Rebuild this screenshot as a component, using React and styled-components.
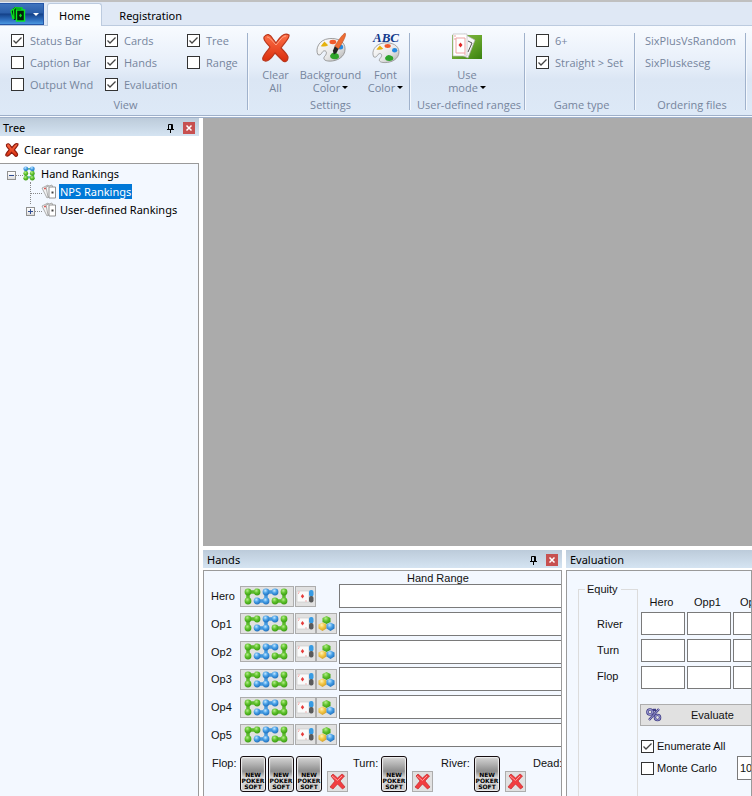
import React from "react";
import styled, { createGlobalStyle, css } from "styled-components";

const UI = '"Open Sans", "Noto Sans", sans-serif';
const UI_DARK = '"Noto Sans", "Open Sans", sans-serif';
const DIALOG = '"Liberation Sans", Arial, sans-serif';

const GlobalStyle = createGlobalStyle`
  *, *::before, *::after { box-sizing: border-box; }
  html, body, #root { height: 100%; margin: 0; }
  body { overflow: hidden; background: #fff; color: #000; font: 12px/18px ${UI}; }
  button, input { font: inherit; color: inherit; margin: 0; border-radius: 0; }
  svg { display: block; flex: none; overflow: visible; }
`;

const Window = styled.div`
  display: flex;
  flex-direction: column;
  height: 100%;
  overflow: hidden;
`;

/* ---------- Ribbon ---------- */

const TabBar = styled.nav`
  display: flex;
  flex: none;
  height: 26px;
  padding-top: 1px;
  border-top: 2px solid #c0c0c0;
  border-bottom: 1px solid #bccbdf;
  background: #dfe8f5;
`;

const AppButton = styled.button`
  display: flex;
  align-items: center;
  justify-content: center;
  gap: 5px;
  width: 44px;
  height: 22px;
  margin-right: 3px;
  padding: 0 2px 0 8px;
  border: 1px solid #2556a8;
  border-left: 0;
  background: linear-gradient(#3f74bd, #2a5da8 45%, #134088 50%, #2f70c0 80%, #4b98e0);
`;

const Tab = styled.button`
  height: 23px;
  padding: 0 11px;
  border: 1px solid transparent;
  border-bottom: 0;
  background: transparent;
  font: 11px/21px ${UI_DARK};
  margin-right: 5px;
  ${(p) =>
    p.$active &&
    css`
      border-color: #bccbdf;
      border-radius: 3px 3px 0 0;
      background: #f9fcff;
    `}
`;

const Ribbon = styled.div`
  display: flex;
  flex: none;
  height: 92px;
  padding-top: 7px;
  background: linear-gradient(#f8fbff, #e6eef9 45%, #dbe6f4 60%, #dde9f7);
  border-bottom: 3px double #9eb0ca;
  color: #76859d;
  font-size: 11px;
  line-height: 13px;
`;

const Group = styled.section`
  display: flex;
  flex-direction: column;
  flex: none;
  width: ${(p) => p.$width}px;
  height: 77px;
  border-right: 1px solid #a0b2cc;
  box-shadow: 1px 0 #f4f8fd;
`;

const GroupBody = styled.div`
  display: flex;
  flex: 1;
  min-height: 0;
  padding-left: ${(p) => p.$indent || 0}px;
  justify-content: ${(p) => (p.$center ? "center" : "flex-start")};
`;

const GroupTitle = styled.h2`
  margin: 0 -4px -2px 0;
  font-size: 11px;
  font-weight: 400;
  line-height: 15px;
  text-align: center;
  white-space: nowrap;
`;

const CheckColumn = styled.div`
  display: flex;
  flex-direction: column;
  gap: 9px;
  padding-top: 1px;
  width: ${(p) => p.$width}px;
`;

const CheckLabel = styled.label`
  display: flex;
  align-items: center;
  gap: ${(p) => p.$gap || 6}px;
  height: 13px;
  white-space: nowrap;
`;

const CheckInput = styled.input`
  appearance: none;
  flex: none;
  width: 13px;
  height: 13px;
  border: 1px solid #333;
  background: #fff;
  &:checked {
    background: #fff
      url("data:image/svg+xml,%3Csvg xmlns='http://www.w3.org/2000/svg' viewBox='0 0 11 11'%3E%3Cpath d='M1.5 5.5 4 8 9.5 2.5' fill='none' stroke='%23444' stroke-width='1.3'/%3E%3C/svg%3E");
  }
`;

const BigButton = styled.button`
  display: flex;
  flex-direction: column;
  align-items: center;
  width: ${(p) => p.$width}px;
  padding: 0;
  border: 0;
  background: none;
  line-height: 13px;
  white-space: nowrap;
  gap: 5px;
`;

const Caption = styled.span`
  display: block;
  text-align: center;
`;

const DropArrow = styled.i`
  display: inline-block;
  margin-left: 2px;
  border: 3px solid transparent;
  border-top-color: ${(p) => p.$color || "#000"};
  border-bottom: 0;
  vertical-align: 3px;
`;

const FileList = styled.div`
  display: flex;
  flex-direction: column;
  align-items: flex-start;
  gap: 9px;
  padding-top: 1px;
`;

const FileButton = styled.button`
  padding: 0;
  border: 0;
  background: none;
  line-height: 13px;
`;

/* ---------- Docked panels ---------- */

const Workspace = styled.div`
  display: flex;
  flex: 1;
  gap: 4px;
  min-height: 0;
`;

const Sidebar = styled.aside`
  display: flex;
  flex-direction: column;
  flex: none;
  width: 199px;
`;

const Main = styled.main`
  display: flex;
  flex-direction: column;
  flex: 1;
  gap: 4px;
  min-width: 0;
`;

const Canvas = styled.div`
  flex: 1;
  background: #ababab;
`;

const BottomDock = styled.div`
  display: flex;
  flex: none;
  gap: 4px;
  height: 246px;
`;

const Panel = styled.section`
  display: flex;
  flex-direction: column;
  overflow: hidden;
  min-width: 0;
  flex: ${(p) => (p.$width ? `0 0 ${p.$width}px` : "1")};
`;

const PanelHeader = styled.header`
  display: flex;
  align-items: center;
  flex: none;
  gap: 7px;
  height: 18px;
  padding: 2px 4px 0 ${(p) => p.$indent || 4}px;
  background: linear-gradient(#bccbda, #d5e4f2);
`;

const PanelTitle = styled.h2`
  flex: 1;
  margin: 0;
  font: 400 11px/16px ${UI_DARK};
`;

const IconButton = styled.button`
  display: flex;
  align-items: center;
  justify-content: center;
  width: 12px;
  height: 12px;
  padding: 0;
  border: 0;
  background: ${(p) => (p.$close ? "#c75050" : "transparent")};
`;

const PanelBody = styled.div`
  flex: 1;
  margin-top: 2px;
  border: 1px solid #9a9a9a;
  border-bottom: 0;
  background: #f3f8ff;
  color: #111;
  font: 11px/14px ${DIALOG};
  overflow: hidden;
  white-space: nowrap;
`;

/* ---------- Tree ---------- */

const TreeToolbar = styled.div`
  display: flex;
  align-items: center;
  height: 27px;
`;

const ClearRange = styled.button`
  display: flex;
  align-items: center;
  gap: 5px;
  padding: 0 0 0 5px;
  border: 0;
  background: none;
  font: 11px/18px ${UI_DARK};
`;

const TreeBox = styled.div`
  flex: 1;
  border: 1px solid #9a9a9a;
  border-width: 1px 1px 0 0;
  background: #f3f8ff;
`;

const TreeList = styled.ul`
  margin: 0;
  padding: 0 0 0 ${(p) => p.$indent}px;
  list-style: none;
`;

const TreeRow = styled.div`
  display: flex;
  align-items: center;
  height: 18px;
  font: 11px/15px ${UI_DARK};
`;

const Expander = styled.button`
  display: flex;
  align-items: center;
  justify-content: center;
  width: 9px;
  height: 9px;
  margin-top: 4px;
  padding: 0;
  border: 1px solid #919191;
  background: linear-gradient(#fff, #ddd);
`;

const Stem = styled.span`
  width: 9px;
  height: 18px;
  display: flex;
  justify-content: center;
  &::before {
    content: "";
    height: 22px;
    border-left: 1px dotted #888;
  }
`;

const Branch = styled.span`
  width: 7px;
  margin-top: 4px;
  border-top: 1px dotted #888;
`;

const LongBranch = styled(Branch)`
  width: 12px;
  margin-left: -5px;
`;

const NodeText = styled.span`
  margin-left: ${(p) => p.$gap}px;
  padding: 0 1px;
  ${(p) => p.$selected && "background: #0078d7; color: #fff;"}
`;

/* ---------- Hands ---------- */

const RangeHeading = styled.div`
  padding-left: 203px;
  height: 13px;
`;

const HandRows = styled.div`
  display: flex;
  flex-direction: column;
  justify-content: space-between;
  height: 163px;
  padding-left: 7px;
`;

const HandRow = styled.div`
  display: flex;
  align-items: center;
  height: 24px;
`;

const HandLabel = styled.label`
  flex: none;
  width: 29px;
`;

const ToolButton = styled.button`
  display: flex;
  flex: none;
  align-items: center;
  justify-content: center;
  width: ${(p) => p.$width || 21}px;
  height: 21px;
  margin-right: ${(p) => (p.$width ? 1 : 0)}px;
  padding: 0;
  border: 1px solid #adadad;
  background: #e1e1e1;
`;

const ToolSet = styled.div`
  display: flex;
  flex: none;
  width: 99px;
`;

const TextField = styled.input`
  flex: none;
  width: ${(p) => p.$width}px;
  height: ${(p) => p.$height || 24}px;
  padding: 0 2px;
  border: 1px solid #7a7a7a;
  background: #fff;
`;

const Board = styled.div`
  display: flex;
  align-items: flex-start;
  padding: 9px 0 0 8px;
`;

const BoardLabel = styled.span`
  flex: none;
  width: ${(p) => p.$width}px;
`;

const CardSlots = styled.div`
  display: flex;
  gap: 2px;
  margin-right: ${(p) => p.$after}px;
`;

const CardBack = styled.button`
  display: flex;
  flex-direction: column;
  align-items: center;
  justify-content: flex-end;
  width: 26px;
  height: 36px;
  padding: 0 0 1px;
  border: 1px solid #150d10;
  border-radius: 3px;
  background: linear-gradient(#d6d6d6, #b4b4b4 20%, #8c8c8c 42%, #dcdcdc 62%, #c8c8c8);
  box-shadow: inset 0 0 1px 1px #eee;
  color: #000;
  font: 700 6px/6px "DejaVu Sans", sans-serif;
`;

const ClearButton = styled(ToolButton)`
  align-self: flex-end;
  margin-right: ${(p) => p.$after}px;
`;

/* ---------- Evaluation ---------- */

const EvalLayout = styled.div`
  display: flex;
  height: 100%;
  padding: 11px 0 0 11px;
`;

const Equity = styled.fieldset`
  flex: none;
  width: 60px;
  min-width: 0;
  margin: 0 2px 0 0;
  padding: 0 0 0 18px;
  border: 1px solid #dcdcdc;
  border-bottom: 0;
`;

const Legend = styled.legend`
  margin-left: -12px;
  padding: 0 3px 0 2px;
`;

const StreetNames = styled.div`
  display: flex;
  flex-direction: column;
  gap: 12px;
  padding-top: 21px;
`;

const EvalControls = styled.div`
  display: flex;
  flex-direction: column;
  align-items: flex-start;
  flex: none;
`;

const EquityTable = styled.table`
  margin: 10px 0 0 1px;
  border-spacing: 0;
  th { font-weight: 400; height: 20px; padding: 0 5px 0 0; vertical-align: middle; }
  td { padding: 0 2px 4px 0; height: 27px; }
  input { display: block; }
`;

const EvaluateButton = styled.button`
  display: flex;
  align-items: center;
  gap: 29px;
  width: 124px;
  height: 22px;
  margin: 11px 0 9px;
  padding: 0 5px;
  border: 1px solid #adadad;
  background: #e1e1e1;
`;

const EvalOption = styled.div`
  display: flex;
  align-items: center;
  height: 22px;
`;

const OptionSlot = styled.div`
  width: 97px;
  padding-left: 1px;
`;

/* ---------- Icons ---------- */

const CardsLogo = () => (
  <svg width="16" height="16" viewBox="0 0 16 16">
    <path d="M1 4.5 5 1l7 1 .5 11L4 14Z" fill="#032b08" />
    <path d="M3 3 1 5l2 8M6 1 3.5 3.5 4 13M6 2h6v2M2 9l2 4" fill="none" stroke="#08e21c" strokeWidth="1.3" />
    <rect x="6.5" y="4" width="8" height="11" fill="#03210a" stroke="#08ef22" strokeWidth="1.4" />
    <path d="m10.5 7.500 1.500 2-1.500 2-1.500-2Z" fill="#08e21c" />
  </svg>
);

const CROSS = "M3 4C6 0 9 1 12 6L15 10C19 4 23-1 28 2 29 5 24 9 20 15 23 18 26 21 27 24 27 29 23 30 21 27L14 20C10 26 6 30 2 27 0 24 6 19 9 14 6 10 2 8 3 4Z";

const RedCross = ({ size, stroke = "#b8371d" }) => (
  <svg width={size} height={size} viewBox="0 0 30 30">
    <defs>
      <linearGradient id="crossFill" x2="0" y2="1">
        <stop offset="0" stopColor="#ff7048" />
        <stop offset="1" stopColor="#d92c0b" />
      </linearGradient>
    </defs>
    <path d={CROSS} fill="url(#crossFill)" stroke={stroke} strokeWidth={size < 20 ? 2.5 : 1.2} />
    {size > 20 && <path d="M6 4c3 0 6 5 9 8 4-5 7-9 10-9" fill="none" stroke="#ffa789" />}
  </svg>
);

const PaletteShape = () => (
  <>
    <path
      d="M2 23C-1 17 3 7 14 6c9-1 17 3 17 11 0 9-9 13-16 13-7 0-8-3-5-6 2-3 1-5-1-5-3 0-3 6-7 4Z"
      fill="url(#paletteFill)"
      stroke="#8d8d8d"
      strokeWidth=".9"
    />
    <path d="m5 14 4-5 4 4q-3 2-8 1Z" fill="#e5b20d" />
    <ellipse cx="18" cy="9.7" rx="3.6" ry="2.4" fill="#f05a2c" />
    <ellipse cx="26" cy="15" rx="3" ry="2.7" fill="#2389e2" />
    <path d="M15 24q3-6 9-1 2 5-4 5-5 0-5-4Z" fill="#2da429" />
  </>
);

const PaletteDefs = () => (
  <defs>
    <linearGradient id="paletteFill" x2="1" y2="1">
      <stop offset="0" stopColor="#fff" />
      <stop offset=".6" stopColor="#e6e6e6" />
      <stop offset="1" stopColor="#aaa" />
    </linearGradient>
  </defs>
);

const PaletteBrush = () => (
  <svg width="32" height="30" viewBox="0 0 32 32">
    <PaletteDefs />
    <PaletteShape />
    <path d="M31 0c2 2-2 9-7 17l-4-3C25 6 28 2 31 0Z" fill="#ee6c33" stroke="#b84b1c" strokeWidth=".6" />
    <path d="m20 14 4 3-2 4-3 2-1-4Z" fill="#222" />
  </svg>
);

const PaletteLetters = () => (
  <svg width="30" height="30" viewBox="0 0 30 30">
    <PaletteDefs />
    <g transform="translate(1 5) scale(.87 .82)">
      <PaletteShape />
    </g>
    <text x="15" y="9" textAnchor="middle" fontFamily="Liberation Serif, serif" fontSize="13" fontStyle="italic" fontWeight="700" fill="#123a8c">
      ABC
    </text>
  </svg>
);

const UseModeIcon = () => (
  <svg width="30" height="30" viewBox="0 0 30 30">
    <defs>
      <linearGradient id="felt" x2="1" y2="1">
        <stop offset="0" stopColor="#8ab94e" />
        <stop offset=".5" stopColor="#69a72d" />
        <stop offset="1" stopColor="#38800f" />
      </linearGradient>
    </defs>
    <rect y="2" width="30" height="24" fill="url(#felt)" />
    <path d="m12 1 11 6-7 18-9-4Z" fill="#f8f8f8" stroke="#aaa" strokeWidth=".7" />
    <path d="m16 8 4 2-4 9" fill="none" stroke="#555" />
    <path d="M1 1h14v22H1Z" fill="#fff" stroke="#bbb" strokeWidth=".7" />
    <path d="M4 5h9v15H4ZM2 3h2M2 6h2M12 21h2" fill="none" stroke="#eca3a3" />
    <path d="m8.500 9.500 2 2.500-2 2.500-2-2.500Z" fill="#e12626" />
  </svg>
);

const Pin = () => (
  <svg width="7" height="9" viewBox="0 0 7 9">
    <path d="M1.5 5V.5h4V5M4.5 0v5M0 5.5h7M3.5 6v3" fill="none" stroke="#000" />
  </svg>
);

const CloseX = () => (
  <svg width="6" height="6" viewBox="0 0 6 6">
    <path d="m.5.5 5 5m0-5-5 5" stroke="#fff" strokeWidth="1.5" />
  </svg>
);

const Sign = ({ plus }) => (
  <svg width="7" height="7" viewBox="0 0 7 7">
    <path d={plus ? "M1 3.5h5M3.5 1v5" : "M1 3.5h5"} stroke="#2c4b93" />
  </svg>
);

const BallGradients = () => (
  <defs>
    {[
      ["ballG", "#b5ec8b", "#5fc22c", "#3c9c14"],
      ["ballB", "#c2e6ff", "#469fe6", "#2271bd"],
      ["ballY", "#fff3bd", "#f4c845", "#d3a02c"],
    ].map(([id, a, b, c]) => (
      <radialGradient id={id} key={id} cx=".4" cy=".3" r=".7">
        <stop offset="0" stopColor={a} />
        <stop offset=".5" stopColor={b} />
        <stop offset="1" stopColor={c} />
      </radialGradient>
    ))}
  </defs>
);

const GREEN_BALLS = [[4, 5], [13, 5], [4, 14], [31, 14], [40, 5], [40, 14]];
const BLUE_BALLS = [[13, 14], [22, 5], [22, 14], [31, 5]];

const ChainIcon = () => (
  <svg width="46" height="19" viewBox="0 0 46 19">
    <BallGradients />
    <g fill="none" strokeWidth="3.500">
      <path d="M13 5H4v9M31 14h9V5" stroke="#5dba2e" />
      <path d="M13 14h9V5h9" stroke="#4398de" />
    </g>
    {GREEN_BALLS.map(([x, y]) => <circle key={`${x}-${y}`} cx={x} cy={y} r="3.4" fill="url(#ballG)" />)}
    {BLUE_BALLS.map(([x, y]) => <circle key={`${x}-${y}`} cx={x} cy={y} r="3.4" fill="url(#ballB)" />)}
  </svg>
);

const RootIcon = () => (
  <svg width="13" height="15" viewBox="0 0 14 16">
    <BallGradients />
    <path d="M3 3h8M3 3v9h8V3" fill="none" stroke="#5bb8a0" strokeWidth="2" />
    {[3, 8, 13].map((y) =>
      [3, 10].map((x) => <circle key={`${x}-${y}`} cx={x} cy={y} r="2.6" fill={y === 3 ? "url(#ballB)" : "url(#ballG)"} />)
    )}
  </svg>
);

const RankingIcon = () => (
  <svg width="15" height="15" viewBox="0 0 15 15">
    <path d="m0 4 6-3 5 9-6 4Z" fill="#f3f3f3" stroke="#999" strokeWidth=".8" />
    <path d="M2 4.500h2M3 3.500v2" stroke="#df5555" />
    <path d="m4 3 6-2 3 11-7 1Z" fill="#f6f6f6" stroke="#999" strokeWidth=".8" />
    <path d="M7 3h6.500v11H7Z" fill="#fff" stroke="#888" strokeWidth=".9" />
    <path d="M9.500 7.500h2v2h-2Z" fill="#444" />
  </svg>
);

const CardPickIcon = () => (
  <svg width="17" height="15" viewBox="0 0 17 15">
    <path d="M0 2h12v11H0Z" fill="#fafafa" stroke="#ccc" strokeWidth=".7" />
    <path d="m5.500 5 1.700 2.200-1.700 2.200-1.700-2.200Z" fill="#e63c3c" />
    <path d="M1 3h2M1 4.500h1M8 12h2" stroke="#f0b0b0" />
    <rect x="12" y="1" width="4.500" height="6.500" rx="2" fill="#379be3" />
    <rect x="12" y="7" width="4.500" height="6.500" rx="2" fill="#5a5a5a" />
  </svg>
);

const CubesIcon = () => (
  <svg width="17" height="17" viewBox="0 0 17 17">
    <BallGradients />
    <path d="m8.500 1 4 2v4l-4 2-4-2V3Z" fill="url(#ballG)" />
    <path d="m4.500 7.500 4 2v4l-4 2.500-4-2.500v-4Z" fill="url(#ballY)" />
    <path d="m12.500 7.500 4 2v4l-4 2.500-4-2.500v-4Z" fill="url(#ballB)" />
  </svg>
);

const DeleteIcon = () => (
  <svg width="17" height="17" viewBox="0 0 17 17">
    <path
      d="M2 3 4 1l4.500 4L13 1l2.500 2-4.500 5 5 6-2.500 2-5-5L4 16l-3-2 5-6Z"
      fill="#f23e40"
      stroke="#c3262b"
      strokeWidth=".7"
      strokeLinejoin="round"
    />
    <path d="m3 3 5.500 4.500L13 3" fill="none" stroke="#ff9a98" />
  </svg>
);

const PercentIcon = () => (
  <svg width="16" height="14" viewBox="0 0 16 14">
    <g fill="none" stroke="#3f3c86" strokeWidth="2.4">
      <circle cx="4" cy="4" r="2.600" />
      <circle cx="11.500" cy="9.500" r="2.600" />
      <path d="M13 1 3 12M7 2h3" />
    </g>
    <g fill="none" stroke="#aaa9de" strokeWidth=".9">
      <circle cx="4" cy="4" r="2.600" />
      <circle cx="11.500" cy="9.500" r="2.600" />
      <path d="M13 1 3 12" />
    </g>
  </svg>
);

/* ---------- Parts ---------- */

const Check = ({ label, checked, gap }) => (
  <CheckLabel $gap={gap}>
    <CheckInput type="checkbox" defaultChecked={checked} />
    {label}
  </CheckLabel>
);

const Command = ({ icon, first, second, width, menu }) => (
  <BigButton $width={width} aria-haspopup={menu ? "menu" : undefined}>
    {icon}
    <Caption>
      {first}
      <br />
      {second}
      {menu && <DropArrow />}
    </Caption>
  </BigButton>
);

const RibbonGroup = ({ title, width, indent, center, children }) => (
  <Group $width={width}>
    <GroupBody $indent={indent} $center={center}>{children}</GroupBody>
    <GroupTitle>{title}</GroupTitle>
  </Group>
);

const Header = ({ title, controls, indent }) => (
  <PanelHeader $indent={indent}>
    <PanelTitle>{title}</PanelTitle>
    {controls && (
      <>
        <IconButton aria-label="Auto hide"><Pin /></IconButton>
        <IconButton $close aria-label="Close"><CloseX /></IconButton>
      </>
    )}
  </PanelHeader>
);

const PLAYERS = ["Hero", "Op1", "Op2", "Op3", "Op4", "Op5"];
const STREETS = ["River", "Turn", "Flop"];
const OPPONENTS = ["Hero", "Opp1", "Opp2"];
const BOARD = [
  { name: "Flop", width: 28, cards: 3, cardsAfter: 5, after: 5 },
  { name: "Turn", width: 28, cards: 1, cardsAfter: 5, after: 8 },
  { name: "River", width: 33, cards: 1, cardsAfter: 5, after: 7 },
];

export default function App() {
  return (
    <Window>
      <GlobalStyle />
      <TabBar>
        <AppButton aria-label="Application menu">
          <CardsLogo />
          <DropArrow $color="#fff" />
        </AppButton>
        <Tab $active>Home</Tab>
        <Tab>Registration</Tab>
      </TabBar>

      <Ribbon>
        <RibbonGroup title="View" width={248} indent={11}>
          <CheckColumn $width={94}>
            <Check label="Status Bar" checked />
            <Check label="Caption Bar" />
            <Check label="Output Wnd" />
          </CheckColumn>
          <CheckColumn $width={82}>
            <Check label="Cards" checked />
            <Check label="Hands" checked />
            <Check label="Evaluation" checked />
          </CheckColumn>
          <CheckColumn $width={60}>
            <Check label="Tree" checked />
            <Check label="Range" />
          </CheckColumn>
        </RibbonGroup>
        <RibbonGroup title="Settings" width={162} indent={4} center>
          <Command width={44} icon={<RedCross size={30} />} first="Clear" second="All" />
          <Command width={66} icon={<PaletteBrush />} first="Background" second="Color" menu />
          <Command width={44} icon={<PaletteLetters />} first="Font" second="Color" menu />
        </RibbonGroup>
        <RibbonGroup title="User-defined ranges" width={115} center>
          <Command width={46} icon={<UseModeIcon />} first="Use" second="mode" menu />
        </RibbonGroup>
        <RibbonGroup title="Game type" width={110} indent={11}>
          <CheckColumn $width={94}>
            <Check label="6+" />
            <Check label="Straight > Set" checked />
          </CheckColumn>
        </RibbonGroup>
        <RibbonGroup title="Ordering files" width={111} indent={10}>
          <FileList>
            <FileButton>SixPlusVsRandom</FileButton>
            <FileButton>SixPluskeseg</FileButton>
          </FileList>
        </RibbonGroup>
      </Ribbon>

      <Workspace>
        <Sidebar>
          <Header title="Tree" controls indent={3} />
          <TreeToolbar>
            <ClearRange>
              <RedCross size={14} stroke="#8d1c10" />
              Clear range
            </ClearRange>
          </TreeToolbar>
          <TreeBox>
            <TreeList $indent={7}>
              <li>
                <TreeRow>
                  <Expander aria-label="Collapse"><Sign /></Expander>
                  <Branch />
                  <RootIcon />
                  <NodeText $gap={4}>Hand Rankings</NodeText>
                </TreeRow>
                <TreeList $indent={19}>
                  <li>
                    <TreeRow>
                      <Stem />
                      <LongBranch />
                      <RankingIcon />
                      <NodeText $gap={2} $selected>NPS Rankings</NodeText>
                    </TreeRow>
                  </li>
                  <li>
                    <TreeRow>
                      <Expander aria-label="Expand"><Sign plus /></Expander>
                      <Branch />
                      <RankingIcon />
                      <NodeText $gap={2}>User-defined Rankings</NodeText>
                    </TreeRow>
                  </li>
                </TreeList>
              </li>
            </TreeList>
          </TreeBox>
        </Sidebar>

        <Main>
          <Canvas />
          <BottomDock>
            <Panel $width={359}>
              <Header title="Hands" controls />
              <PanelBody>
                <RangeHeading>Hand Range</RangeHeading>
                <HandRows>
                  {PLAYERS.map((name, i) => (
                    <HandRow key={name}>
                      <HandLabel htmlFor={`range-${name}`}>{name}</HandLabel>
                      <ToolSet>
                        <ToolButton $width={54} aria-label={`${name} range`}><ChainIcon /></ToolButton>
                        <ToolButton aria-label={`${name} cards`}><CardPickIcon /></ToolButton>
                        {i > 0 && <ToolButton aria-label={`${name} groups`}><CubesIcon /></ToolButton>}
                      </ToolSet>
                      <TextField id={`range-${name}`} $width={240} />
                    </HandRow>
                  ))}
                </HandRows>
                <Board>
                  {BOARD.map((street) => (
                    <React.Fragment key={street.name}>
                      <BoardLabel $width={street.width}>{street.name}:</BoardLabel>
                      <CardSlots $after={street.cardsAfter}>
                        {Array.from({ length: street.cards }, (_, i) => (
                          <CardBack key={i}>
                            <span>NEW</span>
                            <span>POKER</span>
                            <span>SOFT</span>
                          </CardBack>
                        ))}
                      </CardSlots>
                      <ClearButton $after={street.after} aria-label={`Clear ${street.name}`}>
                        <DeleteIcon />
                      </ClearButton>
                    </React.Fragment>
                  ))}
                  <BoardLabel $width={40}>Dead:</BoardLabel>
                </Board>
              </PanelBody>
            </Panel>

            <Panel>
              <Header title="Evaluation" />
              <PanelBody>
                <EvalLayout>
                  <Equity>
                    <Legend>Equity</Legend>
                    <StreetNames>
                      {STREETS.map((s) => <span key={s}>{s}</span>)}
                    </StreetNames>
                  </Equity>
                  <EvalControls>
                    <EquityTable>
                      <thead>
                        <tr>{OPPONENTS.map((o) => <th key={o} scope="col">{o}</th>)}</tr>
                      </thead>
                      <tbody>
                        {STREETS.map((s) => (
                          <tr key={s}>
                            {OPPONENTS.map((o) => (
                              <td key={o}><TextField $width={44} $height={23} aria-label={`${s} ${o}`} /></td>
                            ))}
                          </tr>
                        ))}
                      </tbody>
                    </EquityTable>
                    <EvaluateButton><PercentIcon />Evaluate</EvaluateButton>
                    <EvalOption>
                      <OptionSlot><Check label="Enumerate All" checked gap={3} /></OptionSlot>
                    </EvalOption>
                    <EvalOption>
                      <OptionSlot><Check label="Monte Carlo" gap={3} /></OptionSlot>
                      <TextField $width={60} defaultValue="1000" aria-label="Monte Carlo trials" />
                    </EvalOption>
                  </EvalControls>
                </EvalLayout>
              </PanelBody>
            </Panel>
          </BottomDock>
        </Main>
      </Workspace>
    </Window>
  );
}
